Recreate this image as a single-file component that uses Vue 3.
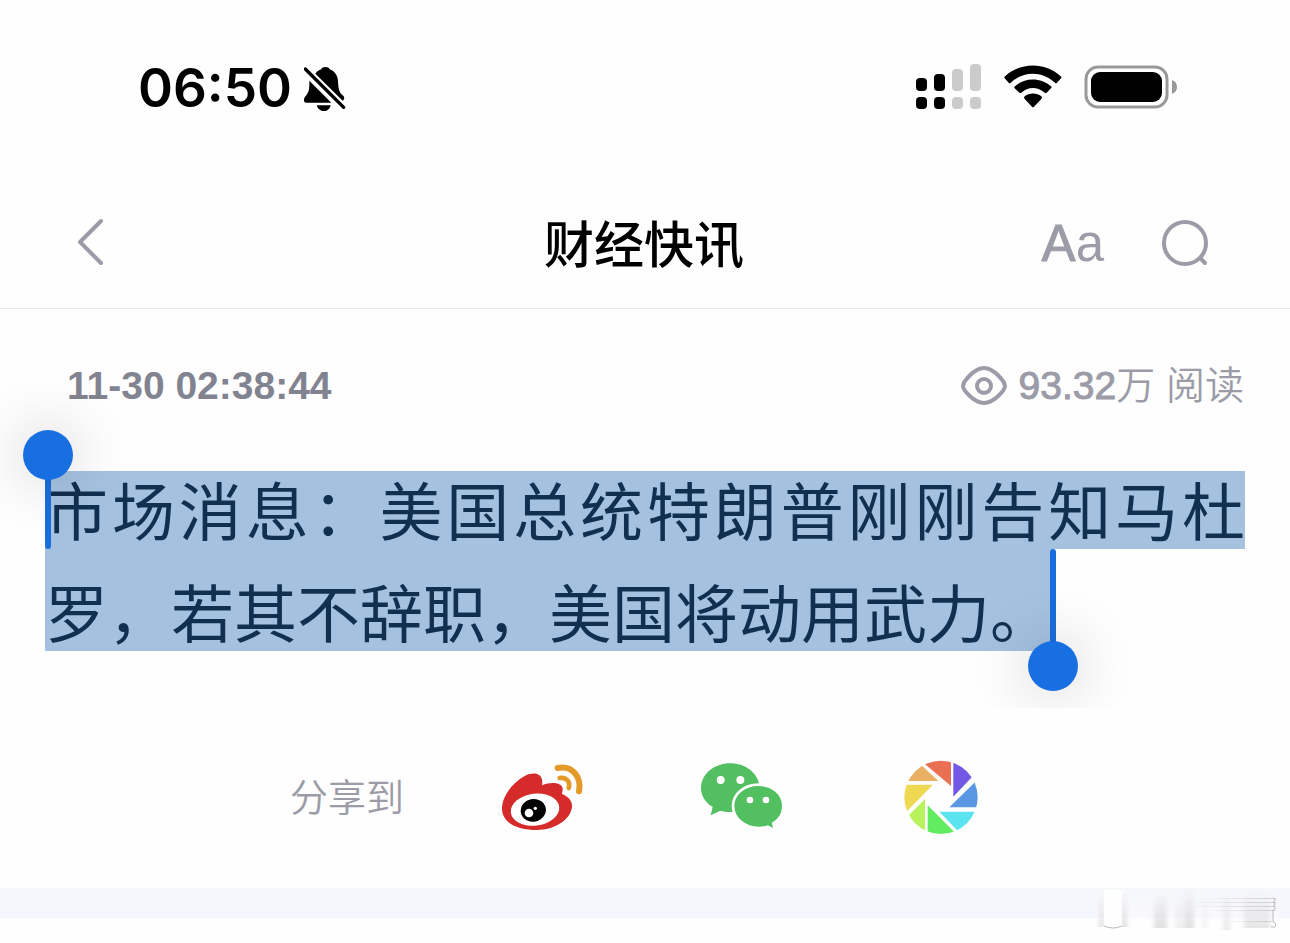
<script setup>
const title = '财经快讯'
const message = '市场消息：美国总统特朗普刚刚告知马杜罗，若其不辞职，美国将动用武力。'
</script>

<template>
  <div class="page">
    <div class="status">
      <div class="clock">
        <span>06:50</span>
        <svg width="46" height="48" viewBox="0 0 138 144" aria-hidden="true">
          <path d="M34 29C40 20 48 18 52 16C54 7 74 7 77 16C92 21 101 34 102 52C103 82 108 87 119 97C122 101 121 108 116 110Z" />
          <path d="M16 50L82 116H7C-3 116-2 103 5 96C14 87 17 76 16 50Z" />
          <path d="M38 124H80C76 147 44 147 38 124Z" />
          <path d="M4 15L119 130" stroke="#000" stroke-width="10" stroke-linecap="round" />
        </svg>
      </div>
      <div class="signals">
        <svg width="66" height="46" viewBox="0 0 66 46" aria-hidden="true">
          <g>
            <rect x="0" y="14" width="11" height="13" rx="4" />
            <rect x="18" y="10" width="11" height="17" rx="4" />
            <rect x="0" y="33" width="11" height="12" rx="4" />
            <rect x="18" y="33" width="11" height="12" rx="4" />
          </g>
          <g fill="#cbcbcb">
            <rect x="36" y="5" width="11" height="22" rx="4" />
            <rect x="54" y="0" width="11" height="27" rx="4" />
            <rect x="36" y="33" width="11" height="12" rx="4" />
            <rect x="54" y="33" width="11" height="12" rx="4" />
          </g>
        </svg>
        <svg width="58" height="44" viewBox="0 0 174 132" aria-hidden="true">
          <path d="M2 40Q0 37 3 34C49-9 124-9 170 34Q174 37 171 40L159 53Q156 56 153 53C114 17 59 17 20 53Q17 56 14 53Z" />
          <path d="M32 70Q29 67 33 64C63 37 110 37 141 64Q144 67 141 70L128 83Q125 85 122 83C102 64 71 64 52 83Q49 85 46 83Z" />
          <path d="M62 102Q58 98 62 94C76 83 98 83 112 94Q116 98 112 102L90 125Q87 128 84 125Z" />
        </svg>
        <svg width="94" height="44" viewBox="0 0 94 44" aria-hidden="true">
          <rect x="2" y="2" width="81" height="40" rx="12" fill="none" stroke="#999" stroke-width="3" />
          <rect x="7" y="7" width="71" height="30" rx="9" />
          <path d="M88 15Q93 17 93 22T88 29Z" fill="#999" />
        </svg>
      </div>
    </div>

    <header class="nav">
      <button class="icon-button back" aria-label="返回">
        <svg width="28" height="48" viewBox="0 0 28 48">
          <path d="M25 3L4 24L25 45" fill="none" stroke="#9b9ca8" stroke-width="4" stroke-linecap="round" stroke-linejoin="round" />
        </svg>
      </button>
      <h1>{{ title }}</h1>
      <div class="tools">
        <button class="icon-button font-size"><span class="heavy">A</span>a</button>
        <button class="icon-button" aria-label="搜索">
          <svg width="48" height="48" viewBox="0 0 48 48">
            <g fill="none" stroke="#9b9ca8" stroke-width="4" stroke-linecap="round">
              <circle cx="23" cy="25" r="21" />
              <path d="M38 40L43 45" />
            </g>
          </svg>
        </button>
      </div>
    </header>

    <article class="story">
      <div class="meta">
        <time>11-30 02:38:44</time>
        <span class="reads">
          <svg width="48" height="40" viewBox="0 0 48 40" aria-hidden="true">
            <g fill="none" stroke="#9b9ca8" stroke-width="4">
              <path d="M3 20C3 16 14 2 24 2S45 16 45 20S34 37 24 37S3 24 3 20Z" />
              <circle cx="24" cy="20" r="7" />
            </g>
          </svg>
          <span><span class="count">93.32</span>万 阅读</span>
        </span>
      </div>
      <p class="selected">
        {{ message }}
        <span class="handle start"></span>
        <span class="handle end"></span>
      </p>
    </article>

    <section class="share">
      <span class="label">分享到</span>
      <button class="icon-button" aria-label="微博">
        <svg width="110" height="90" viewBox="0 0 330 270">
          <path fill="#d52c2b" d="M36 180C34 143 65 99 104 78C133 64 162 69 156 106C181 95 211 97 217 112C220 119 216 127 216 132C239 141 248 157 246 172C241 210 194 240 141 240C83 240 40 220 36 180Z" />
          <ellipse cx="135" cy="179" rx="73" ry="48" transform="rotate(-7 135 179)" fill="#fff" />
          <ellipse cx="130" cy="181" rx="38" ry="34" transform="rotate(-12 130 181)" />
          <circle cx="117" cy="189" r="13" fill="#fff" />
          <circle cx="136" cy="175" r="5" fill="#fff" />
          <g fill="none" stroke="#e49a29" stroke-linecap="round">
            <path d="M203 54C245 45 276 79 267 124" stroke-width="18" />
            <path d="M209 84C228 81 242 94 236 114" stroke-width="14" />
          </g>
        </svg>
      </button>
      <button class="icon-button" aria-label="微信">
        <svg width="110" height="90" viewBox="0 0 330 270">
          <path fill="#52bf60" d="M121 40C73 40 33 72 33 114C33 138 46 157 68 171L62 196L91 182C101 185 114 187 127 186L208 104C201 67 165 40 121 40Z" />
          <path fill="#52bf60" stroke="#fff" stroke-width="8" d="M206 104C163 104 129 132 129 168C129 206 166 235 208 234C217 234 225 233 233 230L255 241L250 220C269 209 280 190 280 168C280 132 247 104 206 104Z" />
          <g fill="#fff">
            <circle cx="92" cy="90" r="12" />
            <circle cx="151" cy="90" r="12" />
            <circle cx="180" cy="150" r="10" />
            <circle cx="228" cy="150" r="10" />
          </g>
        </svg>
      </button>
      <button class="icon-button" aria-label="朋友圈">
        <svg width="110" height="90" viewBox="0 0 330 270">
          <defs>
            <clipPath id="lens"><circle cx="153" cy="142" r="110" /></clipPath>
          </defs>
          <g clip-path="url(#lens)">
            <path fill="#ea7053" d="M90 30H183V108Z" />
            <path fill="#7159e6" d="M190 20V140L260 66V20Z" />
            <path fill="#5a98e3" d="M270 82L178 172H280Z" />
            <path fill="#5be4f0" d="M148 185H280L210 250Z" />
            <path fill="#62ed60" d="M113 166L202 255H113Z" />
            <path fill="#b9f35c" d="M105 147V260L40 212Z" />
            <path fill="#efd953" d="M30 104H129L40 195Z" />
            <path fill="#eab063" d="M30 93H145L88 40Z" />
          </g>
        </svg>
      </button>
    </section>

    <footer class="divider">
      <svg width="184" height="44" viewBox="0 0 184 44" aria-hidden="true">
        <defs>
          <linearGradient id="fade" x2="0" y2="1">
            <stop offset="0" stop-color="#999" stop-opacity="0" />
            <stop offset="1" stop-color="#999" stop-opacity=".3" />
          </linearGradient>
          <linearGradient id="wash" x2="0" y2="1">
            <stop offset="0" stop-color="#fff" stop-opacity=".1" />
            <stop offset="1" stop-color="#fff" />
          </linearGradient>
          <linearGradient id="lines">
            <stop offset="0" stop-color="#aaa" stop-opacity="0" />
            <stop offset="1" stop-color="#aaa" stop-opacity=".5" />
          </linearGradient>
          <filter id="soft"><feGaussianBlur stdDeviation="2 0" /></filter>
        </defs>
        <rect width="184" height="44" fill="url(#wash)" opacity=".6" />
        <g fill="url(#fade)" filter="url(#soft)">
          <rect x="3" y="4" width="5" height="35" />
          <rect x="25" y="4" width="6" height="35" />
          <rect x="58" y="4" width="13" height="36" />
          <rect x="79" y="4" width="8" height="36" opacity=".5" />
          <rect x="88" y="0" width="10" height="40" />
          <rect x="107" y="4" width="4" height="36" opacity=".5" />
          <rect x="127" y="4" width="7" height="38" opacity=".7" />
          <rect x="148" y="4" width="26" height="36" opacity=".8" />
        </g>
        <path fill="#fff" fill-opacity=".8" d="M8 2H26V38Q17 42 8 38Z" />
        <path fill="none" stroke="#bbb" d="M8 38Q17 42 26 38" />
        <g fill="url(#lines)">
          <rect x="108" y="10" width="72" height="1" />
          <rect x="88" y="14" width="92" height="1" />
          <rect x="88" y="18" width="92" height="1" />
          <rect x="108" y="22" width="72" height="1" />
          <rect x="128" y="33" width="48" height="1" />
        </g>
        <path fill="none" stroke="#bbb" d="M177 10Q181 12 177 14Q181 16 177 18Q181 20 177 22V34Q181 35 179 39H175" />
      </svg>
    </footer>
  </div>
</template>

<style>
body {
  margin: 0;
  background: #fefefe;
}
</style>

<style scoped>
.page {
  font-family: "Liberation Sans", "Noto Sans CJK SC", sans-serif;
  color: #000;
}
.status {
  display: flex;
  justify-content: space-between;
  align-items: center;
  height: 176px;
  padding: 0 112px 0 138px;
}
.clock {
  display: flex;
  align-items: center;
  gap: 12px;
  font: 600 53px/64px Inter, sans-serif;
}
.signals {
  display: flex;
  align-items: center;
  gap: 22px;
  margin-top: -2px;
}
.nav {
  display: grid;
  grid-template-columns: 1fr auto 1fr;
  align-items: center;
  height: 132px;
  padding: 0 80px 0 76px;
  border-bottom: 1px solid #e9e9ec;
}
.icon-button {
  display: block;
  border: 0;
  padding: 0;
  background: none;
  color: #9b9ca8;
  font: inherit;
}
.icon-button svg {
  display: block;
}
h1 {
  margin: 0;
  padding: 8px 0 0 2px;
  font-size: 50px;
  line-height: 64px;
  font-weight: 500;
}
.tools {
  display: flex;
  align-items: center;
  justify-content: flex-end;
  gap: 58px;
}
.font-size {
  padding-top: 4px;
  font-size: 51px;
  line-height: 56px;
}
.heavy {
  -webkit-text-stroke: 1px currentColor;
}
.story {
  height: 399px;
  overflow: hidden;
}
.meta {
  display: flex;
  justify-content: space-between;
  align-items: center;
  padding: 49px 46px 0 67px;
  font-size: 39px;
  line-height: 56px;
  color: #9b9ca8;
}
time {
  font-weight: 700;
  color: #828391;
}
.reads {
  display: flex;
  align-items: center;
  gap: 11px;
  font-weight: 350;
}
.count {
  -webkit-text-stroke: 1px currentColor;
}
.selected {
  position: relative;
  margin: 48px 45px 0;
  font-size: 63px;
  line-height: 102px;
  font-weight: 400;
  text-align: justify;
  color: #112f4e;
  background:
    linear-gradient(#a4c2df, #a4c2df) 0 9px / 100% 78px no-repeat,
    linear-gradient(#a4c2df, #a4c2df) 0 87px / 16em 102px no-repeat;
}
.handle {
  position: absolute;
  width: 6px;
  border-radius: 3px;
  background: #1a6edb;
}
.handle::after {
  content: "";
  position: absolute;
  left: -22px;
  width: 50px;
  height: 50px;
  border-radius: 50%;
  background: #176fe2;
  box-shadow: 0 0 60px rgba(0, 0, 0, 0.22);
}
.start {
  left: 0;
  top: 0;
  height: 87px;
}
.start::after {
  top: -32px;
}
.end {
  left: 1005px;
  top: 87px;
  height: 102px;
}
.end::after {
  bottom: -40px;
}
.share {
  display: flex;
  justify-content: center;
  align-items: center;
  gap: 90px;
  height: 180px;
}
.share .icon-button {
  margin-bottom: 6px;
}
.label {
  margin-right: -4px;
  font-size: 38px;
  line-height: 56px;
  font-weight: 350;
  color: #9b9ca8;
}
.divider {
  display: flex;
  justify-content: flex-end;
  align-items: flex-start;
  padding: 0 10px 11px 0;
  background: linear-gradient(#f5f6fb, #f5f6fb) 0 0 / 100% 30px no-repeat;
}
.divider svg {
  flex: none;
}
</style>
